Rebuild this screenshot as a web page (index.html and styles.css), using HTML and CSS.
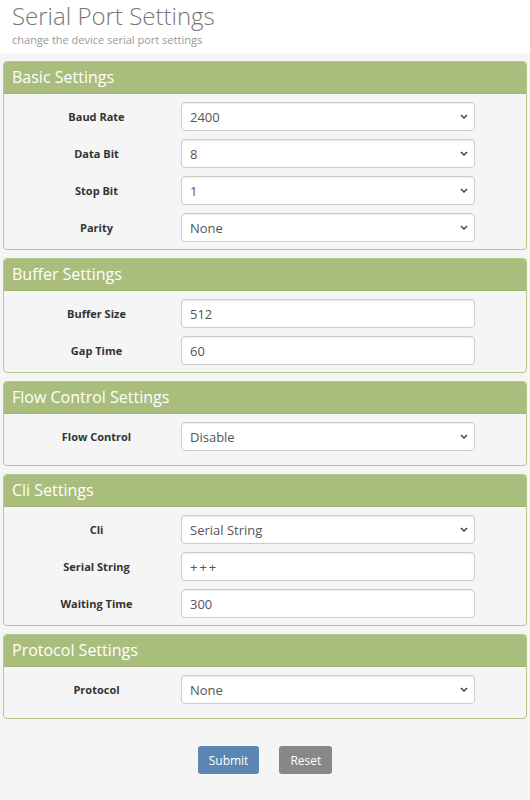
FILE: index.html
```html
<!DOCTYPE html>
<html lang="en">
<head>
    <meta charset="UTF-8">
    <meta name="viewport" content="width=device-width, initial-scale=1.0">
    <title>Serial Port Settings</title>
    <link rel="stylesheet" href="styles.css">
</head>
<body>
    <div class="page-header">
        <h1>Serial Port Settings</h1>
        <p class="subtitle">change the device serial port settings</p>
    </div>

    <div class="content">
        <div class="panel">
            <div class="panel-heading">Basic Settings</div>
            <div class="panel-body">
                <label>Baud Rate</label>
                <select><option>2400</option></select>
                <label>Data Bit</label>
                <select><option>8</option></select>
                <label>Stop Bit</label>
                <select><option>1</option></select>
                <label>Parity</label>
                <select><option>None</option></select>
            </div>
        </div>

        <div class="panel">
            <div class="panel-heading">Buffer Settings</div>
            <div class="panel-body">
                <label>Buffer Size</label>
                <input type="text" value="512">
                <label>Gap Time</label>
                <input type="text" value="60">
            </div>
        </div>

        <div class="panel">
            <div class="panel-heading">Flow Control Settings</div>
            <div class="panel-body single">
                <label>Flow Control</label>
                <select><option>Disable</option></select>
            </div>
        </div>

        <div class="panel">
            <div class="panel-heading">Cli Settings</div>
            <div class="panel-body">
                <label>Cli</label>
                <select><option>Serial String</option></select>
                <label>Serial String</label>
                <input type="text" class="wide-chars" value="+++">
                <label>Waiting Time</label>
                <input type="text" value="300">
            </div>
        </div>

        <div class="panel">
            <div class="panel-heading">Protocol Settings</div>
            <div class="panel-body single">
                <label>Protocol</label>
                <select><option>None</option></select>
            </div>
        </div>

        <div class="actions">
            <button class="btn-submit">Submit</button>
            <button class="btn-reset">Reset</button>
        </div>
    </div>
</body>
</html>
```
FILE: styles.css
```css
body {
    margin: 0;
    font-family: "Open Sans", Arial, sans-serif;
    background-color: #f4f5f4;
    color: #333;
}

.page-header {
    background-color: #fff;
    padding: 0 12px 5px;
    height: 48px;
}

.page-header h1 {
    margin: 0;
    font-size: 24px;
    font-weight: 300;
    color: #777;
    line-height: 32px;
}

.subtitle {
    margin: 0;
    font-size: 11px;
    color: #999;
    line-height: 16px;
}

.content {
    padding: 8px 3px 0;
}

.panel {
    border: 1px solid #b4c78e;
    border-radius: 4px;
    margin-bottom: 8px;
    overflow: hidden;
}

.panel-heading {
    background-color: #a9bd7d;
    border-bottom: 1px solid #9fb372;
    color: #fff;
    font-size: 16px;
    height: 31px;
    line-height: 31px;
    padding: 0 8px;
}

.panel-body {
    display: grid;
    grid-template-columns: 169px 294px;
    row-gap: 8px;
    align-items: center;
    padding: 8px 0 7px 8px;
}

.panel-body.single {
    padding-bottom: 14px;
}

.panel-body label {
    text-align: center;
    font-size: 11px;
    font-weight: 700;
    color: #333;
}

.panel-body select,
.panel-body input {
    box-sizing: border-box;
    height: 29px;
    width: 294px;
    margin: 0;
    padding: 0 8px;
    font-family: "Open Sans", Arial, sans-serif;
    font-size: 13px;
    color: #555;
    background-color: #fff;
    border: 1px solid #ccc;
    border-radius: 4px;
    box-shadow: inset 0 1px 1px rgba(0,0,0,0.075);
}

.panel-body input.wide-chars {
    letter-spacing: 2px;
}

.panel-body select {
    appearance: none;
    background-image: url("data:image/svg+xml;utf8,<svg xmlns='http://www.w3.org/2000/svg' width='8' height='5' viewBox='0 0 8 5'><path d='M1 1l3 3 3-3' fill='none' stroke='%23444' stroke-width='1.5'/></svg>");
    background-repeat: no-repeat;
    background-position: right 6px center;
}

.actions {
    display: flex;
    justify-content: center;
    gap: 20px;
    padding: 19px 0;
}

.actions button {
    height: 28px;
    border: none;
    border-radius: 3px;
    color: #fff;
    font-family: "Open Sans", Arial, sans-serif;
    font-size: 12px;
    padding: 0 11px;
    cursor: pointer;
}

.btn-submit {
    background-color: #5b86b1;
}

.btn-reset {
    background-color: #888;
}
```
